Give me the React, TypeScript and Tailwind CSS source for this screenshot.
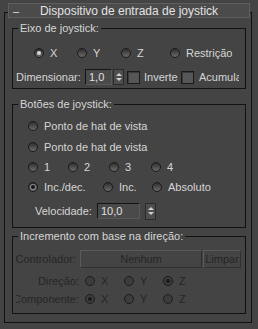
import React from 'react';

type RadioProps = { checked?: boolean; dark?: boolean; disabled?: boolean };

const Radio: React.FC<RadioProps> = ({ checked = false, dark = false, disabled = false }) => (
  <span
    className={`flex h-[10px] w-[10px] shrink-0 items-center justify-center rounded-full border ${
      disabled ? 'border-[#1c1c1c] bg-[#3c3c3c]' : 'border-[#1a1a1a] bg-[linear-gradient(#2e2e2e,#6a6a6a)]'
    }`}
  >
    {checked && (
      <span
        className={`h-[4px] w-[4px] rounded-full ${
          disabled ? 'bg-[#1a1a1a]' : dark ? 'bg-[#151515] ring-1 ring-[#8a8a8a]' : 'bg-[#d8d8d8]'
        }`}
      />
    )}
  </span>
);

const Option: React.FC<RadioProps & { label: string; width: string }> = ({ label, width, ...r }) => (
  <div className={`flex items-center gap-[6px] ${width}`}>
    <Radio {...r} />
    <span className={r.disabled ? 'text-[#262626]' : 'text-[#d6d6d6]'}>{label}</span>
  </div>
);

const Check: React.FC = () => (
  <span className="block h-[13px] w-[13px] shrink-0 border border-[#1a1a1a] bg-[#565656] shadow-[inset_1px_1px_0_#3a3a3a]" />
);

const Arrows: React.FC<{ h: string }> = ({ h }) => (
  <div className={`flex w-[11px] ${h} shrink-0 flex-col items-center justify-center gap-[2px] border border-[#2a2a2a] bg-[#4e4e4e]`}>
    <span className="h-0 w-0 border-x-[3px] border-b-[3px] border-x-transparent border-b-[#d0d0d0]" />
    <span className="h-0 w-0 border-x-[3px] border-t-[3px] border-x-transparent border-t-[#d0d0d0]" />
  </div>
);

const Group: React.FC<{ title: string; className: string; children: React.ReactNode }> = ({ title, className, children }) => (
  <div className={`relative w-[234px] border border-[#121212] ${className}`}>
    <span className="absolute -top-[8px] left-[5px] bg-[#444] px-[2px] leading-[14px] text-[#d6d6d6]">{title}</span>
    {children}
  </div>
);

export default function App() {
  return (
    <div className="h-[329px] w-[258px] overflow-hidden bg-[#444] pt-[3px] font-['Liberation_Sans',Arial,sans-serif] text-[11px] leading-[14px]">
      <div className="pl-[4px]">
        <div className="relative z-10 ml-[4px] flex h-[15px] w-[242px] items-center border border-[#5e5e5e] bg-[#4b4b4b] text-[#e2e2e2]">
          <span className="ml-[4px] w-[8px] leading-[12px]">–</span>
          <span className="flex-1 pr-[12px] text-center text-[12px]">Dispositivo de entrada de joystick</span>
        </div>

        <div className="-mt-[6px] h-[311px] w-[248px] border border-[#111] pl-[7px]">
          <Group title="Eixo de joystick:" className="mt-[15px] h-[61px]">
            <div className="mt-[16px] flex h-[16px] items-center pl-[21px]">
              <Option checked label="X" width="w-[43px]" />
              <Option label="Y" width="w-[44px]" />
              <Option label="Z" width="w-[49px]" />
              <Option label="Restrição" width="w-[60px]" />
            </div>
            <div className="mt-[8px] flex h-[16px] items-center pl-[3px]">
              <span className="w-[69px] text-[#d6d6d6]">Dimensionar:</span>
              <div className="flex h-[16px] w-[27px] items-center border border-[#151515] border-b-[#5a5a5a] border-r-[#5a5a5a] bg-[#4a4a4a] pl-[3px] text-[#e0e0e0]">
                1,0
              </div>
              <div className="ml-[1px]">
                <Arrows h="h-[16px]" />
              </div>
              <div className="ml-[3px]">
                <Check />
              </div>
              <span className="ml-[4px] w-[34px] overflow-hidden whitespace-nowrap text-[#d6d6d6]">Inverter</span>
              <div className="ml-[3px]">
                <Check />
              </div>
              <span className="ml-[5px] w-[40px] overflow-hidden whitespace-nowrap text-[#d6d6d6]">Acumular</span>
            </div>
          </Group>

          <Group title="Botões de joystick:" className="mt-[15px] h-[124px]">
            <div className="pl-[15px] pt-[11px]">
              <div className="flex h-[20px] items-center">
                <Option label="Ponto de hat de vista" width="w-[200px]" />
              </div>
              <div className="flex h-[21px] items-center">
                <Option label="Ponto de hat de vista" width="w-[200px]" />
              </div>
              <div className="flex h-[20px] items-center">
                <Option label="1" width="w-[40px]" />
                <Option label="2" width="w-[41px]" />
                <Option label="3" width="w-[42px]" />
                <Option label="4" width="w-[30px]" />
              </div>
              <div className="flex h-[20px] items-center">
                <Option checked dark label="Inc./dec." width="w-[75px]" />
                <Option label="Inc." width="w-[49px]" />
                <Option label="Absoluto" width="w-[60px]" />
              </div>
            </div>
            <div className="mt-[6px] flex h-[16px] items-center pl-[22px]">
              <span className="w-[62px] text-[#d6d6d6]">Velocidade:</span>
              <div className="flex h-[16px] w-[43px] items-center border border-[#151515] border-b-[#5a5a5a] border-r-[#5a5a5a] bg-[#4a4a4a] pl-[3px] text-[#e0e0e0]">
                10,0
              </div>
              <div className="ml-[5px]">
                <Arrows h="h-[17px]" />
              </div>
            </div>
          </Group>

          <Group title="Incremento com base na direção:" className="mt-[8px] h-[78px]">
            <div className="mt-[13px] flex h-[18px] items-center pl-[3px] text-[#262626]">
              <div className="flex w-[60px] justify-end overflow-hidden whitespace-nowrap">
                <span className="shrink-0">Controlador:</span>
              </div>
              <div className="ml-[4px] flex h-[18px] w-[122px] items-center justify-center border border-[#5a5a5a] border-b-[#303030] border-r-[#303030] bg-[#444]">
                Nenhum
              </div>
              <div className="ml-[1px] flex h-[18px] w-[38px] items-center justify-center border border-[#5a5a5a] border-b-[#303030] border-r-[#303030] bg-[#444]">
                Limpar
              </div>
            </div>
            <div className="mt-[5px] flex h-[16px] items-center pl-[3px] text-[#262626]">
              <div className="flex w-[64px] justify-end overflow-hidden whitespace-nowrap pr-[1px]">
                <span className="shrink-0">Direção:</span>
              </div>
              <div className="ml-[5px] flex">
                <Option disabled label="X" width="w-[39px]" />
                <Option disabled label="Y" width="w-[39px]" />
                <Option disabled checked label="Z" width="w-[30px]" />
              </div>
            </div>
            <div className="mt-[2px] flex h-[16px] items-center pl-[3px] text-[#262626]">
              <div className="flex w-[64px] justify-end overflow-hidden whitespace-nowrap pr-[1px]">
                <span className="shrink-0">Componente:</span>
              </div>
              <div className="ml-[5px] flex">
                <Option disabled checked label="X" width="w-[39px]" />
                <Option disabled label="Y" width="w-[39px]" />
                <Option disabled label="Z" width="w-[30px]" />
              </div>
            </div>
          </Group>
        </div>
      </div>
    </div>
  );
}
